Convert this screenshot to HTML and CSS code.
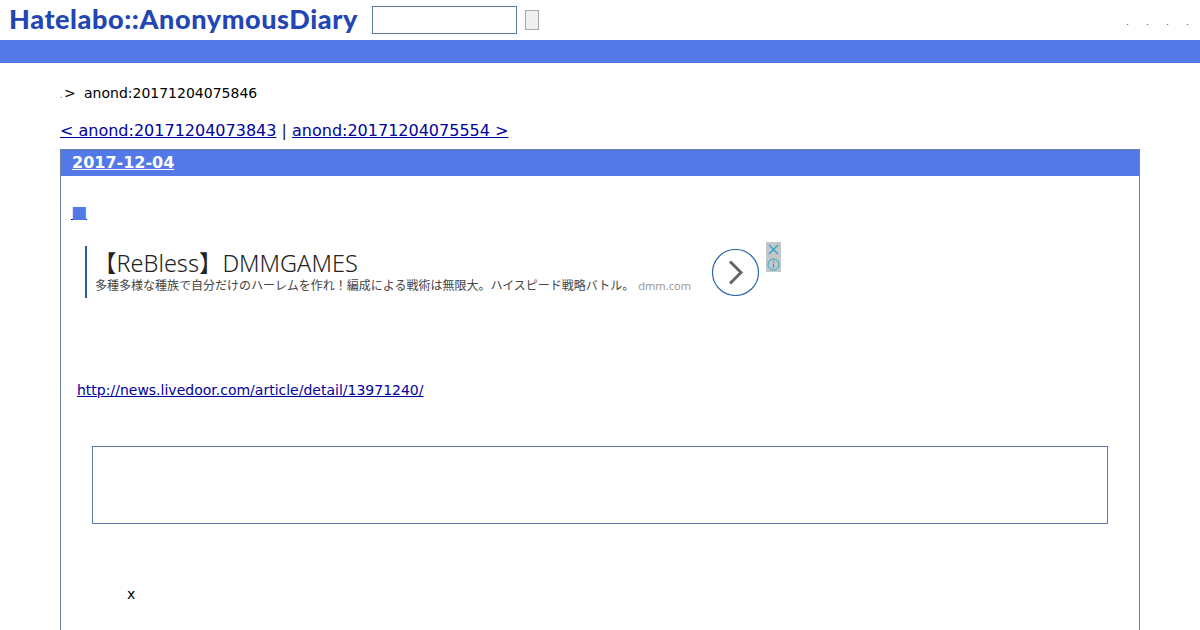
FILE: index.html
```html
<!DOCTYPE html>
<html>
<head>
  <title>anond:20171204075846</title>
  <link rel="stylesheet" href="styles.css">
</head>
<body>
  <div id="header">
    <a class="logo" href="#">Hatelabo::AnonymousDiary</a>
    <form class="search">
      <input type="text" class="search-text">
      <input type="submit" class="search-btn" value="">
    </form>
    <ul class="user-menu">
      <li>.</li>
      <li>.</li>
      <li>.</li>
      <li>.</li>
    </ul>
  </div>
  <div id="bar"></div>

  <div id="content">
    <div class="breadcrumb"><span class="dot">.</span><span class="gt">&gt;</span><span>anond:20171204075846</span></div>
    <div class="pager"><a href="#">&lt; anond:20171204073843</a> | <a href="#">anond:20171204075554 &gt;</a></div>

    <div class="day">
      <h2 class="day-title"><a href="#">2017-12-04</a></h2>
      <div class="day-body">
        <h3 class="entry-mark"><a href="#">■</a></h3>

        <div class="ad">
          <div class="ad-text">
            <div class="ad-title">【ReBless】DMMGAMES</div>
            <div class="ad-desc">多種多様な種族で自分だけのハーレムを作れ！編成による戦術は無限大。ハイスピード戦略バトル。<span class="ad-domain">dmm.com</span></div>
          </div>
          <div class="ad-arrow">
            <svg width="47" height="47" viewBox="0 0 47 47">
              <circle cx="23.5" cy="23.5" r="23" fill="#fff" stroke="#2f6aa8" stroke-width="1.2"/>
              <path d="M18 12.5 L29 23.5 L18 34.5" fill="none" stroke="#666" stroke-width="3"/>
            </svg>
          </div>
          <div class="ad-icons">
            <svg width="15" height="15" viewBox="0 0 15 15">
              <rect width="15" height="15" fill="#c3c7ca"/>
              <path d="M3 3 L12 12 M12 3 L3 12" stroke="#27a5c9" stroke-width="1.2"/>
            </svg>
            <svg width="15" height="15" viewBox="0 0 15 15">
              <rect width="15" height="15" fill="#c3c7ca"/>
              <circle cx="7.5" cy="7.5" r="5.5" fill="none" stroke="#27a5c9" stroke-width="1"/>
              <path d="M7.5 6.5 V11 M7.5 3.8 V5.3" stroke="#27a5c9" stroke-width="1.2"/>
            </svg>
          </div>
        </div>

        <p class="source"><a href="#">http://news.livedoor.com/article/detail/13971240/</a></p>
        <div class="quote-box"></div>
        <p class="mark-x">x</p>
      </div>
    </div>
  </div>
</body>
</html>
```

FILE: styles.css
```css
html, body {
  height: 630px;
  overflow: hidden;
}

body {
  margin: 0;
  font-family: "DejaVu Sans", sans-serif;
  color: #000;
  background-color: #fff;
}

a {
  color: #0000a0;
}

#header {
  display: flex;
  align-items: center;
  height: 40px;
  box-sizing: border-box;
  padding-left: 9px;
}

.logo {
  width: 363px;
  margin-bottom: 4px;
  font-family: "Lato", sans-serif;
  font-size: 27px;
  font-weight: 900;
  letter-spacing: 0.6px;
  color: #2246b4;
  text-decoration: none;
  white-space: nowrap;
}

.search {
  display: flex;
  align-items: center;
  gap: 8px;
  margin: 0;
}

.search-text {
  width: 145px;
  height: 28px;
  box-sizing: border-box;
  margin: 0;
  padding: 0;
  border: 1px solid #5b79a8;
  background-color: #fff;
}

.search-btn {
  width: 14px;
  height: 20px;
  box-sizing: border-box;
  margin: 0;
  padding: 0;
  border: 1px solid #a8a8a8;
  border-radius: 0;
  background-color: #efefef;
}

.user-menu {
  display: flex;
  gap: 15px;
  list-style: none;
  margin: 6px 10px 0 auto;
  padding: 0;
  font-size: 8px;
  line-height: 8px;
}

.user-menu li {
  width: 5px;
  text-align: center;
  color: #333;
}

#bar {
  height: 23px;
  background-color: #5279e7;
}

#content {
  padding: 0 60px;
}

.breadcrumb {
  display: flex;
  align-items: baseline;
  height: 20px;
  margin-top: 20px;
  font-size: 14px;
  line-height: 20px;
}

.breadcrumb .dot {
  width: 4px;
  font-size: 7px;
}

.breadcrumb .gt {
  width: 20px;
}

.pager {
  margin-top: 18px;
  margin-bottom: 9px;
  font-size: 16px;
  line-height: 19px;
  color: #222;
}

.day {
  border: 1px solid #6c80a8;
  border-bottom: none;
}

.day-title {
  margin: 0;
  padding: 0 11px;
  height: 26px;
  font-size: 16px;
  line-height: 25px;
  font-weight: bold;
  background-color: #5279e7;
}

.day-title a {
  color: #fff;
}

.day-body {
  height: 460px;
}

.entry-mark {
  margin: 0;
  padding: 26px 0 0 10px;
  height: 20px;
  font-size: 17px;
  line-height: 20px;
  font-weight: normal;
}

.entry-mark a {
  color: #5279e7;
  text-decoration-color: #0000a0;
}

.ad {
  display: flex;
  margin: 20px 0 0 24px;
  width: 697px;
  height: 56px;
}

.ad-text {
  width: 627px;
  height: 52px;
  margin-top: 4px;
  box-sizing: border-box;
  padding-left: 8px;
  border-left: 2px solid #2f5f9f;
}

.ad-title {
  margin-top: 3px;
  margin-left: -2px;
  font-family: "Noto Sans", "Noto Sans CJK JP", sans-serif;
  font-size: 23.5px;
  font-weight: 300;
  line-height: 29px;
  color: #222;
  white-space: nowrap;
}

.ad-desc {
  font-family: "Noto Sans CJK JP", sans-serif;
  font-size: 12px;
  line-height: 14px;
  color: #444;
  white-space: nowrap;
}

.ad-domain {
  margin-left: 4px;
  font-family: "Noto Sans", sans-serif;
  font-size: 11.1px;
  color: #999;
}

.ad-arrow {
  height: 47px;
  margin-top: 7px;
}

.ad-icons {
  display: flex;
  flex-direction: column;
  margin-left: 7px;
}

.ad-icons svg {
  display: block;
}

.source {
  margin: 83px 0 0 16px;
  font-size: 14px;
  line-height: 18px;
}

.quote-box {
  height: 76px;
  margin: 47px 31px 0;
  border: 1px solid #5b79a8;
}

.mark-x {
  margin: 61px 0 0 66px;
  font-size: 14px;
  line-height: 18px;
}
```
